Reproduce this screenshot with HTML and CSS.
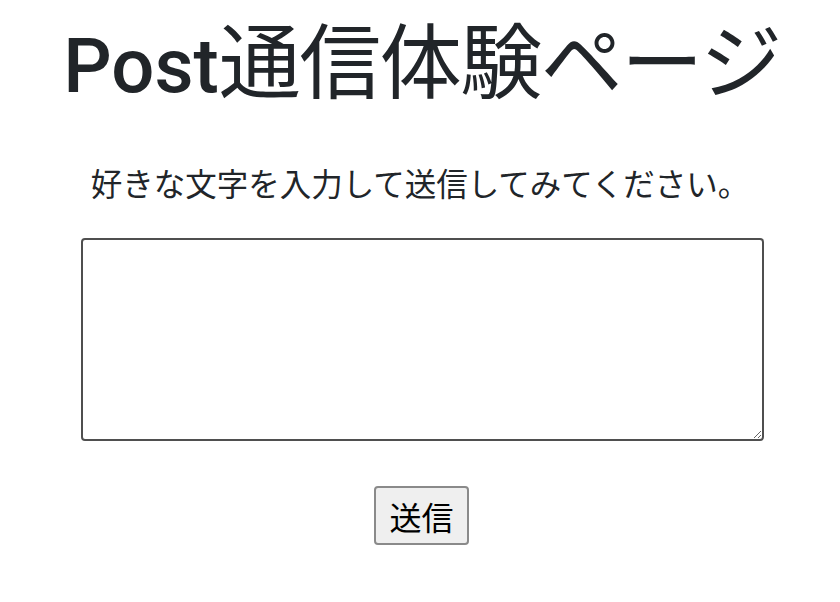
FILE: index.html
```html
<!DOCTYPE html>
<html lang="ja">
<head>
<meta charset="utf-8">
<title>Post通信体験ページ</title>
<link rel="stylesheet" href="styles.css">
</head>
<body>
<main class="page">
  <h1 class="title"><span class="title-latin">Post</span>通信体験ページ</h1>
  <p class="lead">好きな文字を入力して送信してみてください。</p>
  <form class="form">
    <textarea class="input" name="message"></textarea>
    <button class="submit" type="button">送信</button>
  </form>
</main>
</body>
</html>
```

FILE: styles.css
```css
html, body {
  margin: 0;
  padding: 0;
  background: #ffffff;
}
body {
  font-family: "Liberation Sans", "Noto Sans CJK JP", sans-serif;
  color: #212529;
}
.page {
  display: flex;
  flex-direction: column;
  align-items: center;
  padding-top: 14px;
}
.title {
  margin: 0 0 0 4px;
  font-size: 82px;
  font-weight: 400;
  line-height: 100px;
  letter-spacing: -1.5px;
}
.title-latin {
  font-family: Roboto, "Liberation Sans", sans-serif;
  font-weight: 500;
  font-size: 76px;
  letter-spacing: 0;
}
.lead {
  margin: 49px 0 0;
  font-size: 31.5px;
  line-height: 40px;
}
.form {
  display: flex;
  flex-direction: column;
  align-items: center;
  margin-top: 33px;
}
.input {
  box-sizing: border-box;
  width: 683px;
  height: 203px;
  border: 2px solid #4f4f4f;
  border-radius: 4px;
  margin: 0 0 0 4px;
  padding: 4px;
  background: #fff;
}
.submit {
  margin: 45px 0 0 3px;
  box-sizing: border-box;
  width: 95px;
  height: 59px;
  padding: 0;
  font-family: "Liberation Sans", "Noto Sans CJK JP", sans-serif;
  font-size: 32px;
  color: #000;
  background: #efefef;
  border: 2px solid #8a8a8a;
  border-radius: 4px;
}
```
